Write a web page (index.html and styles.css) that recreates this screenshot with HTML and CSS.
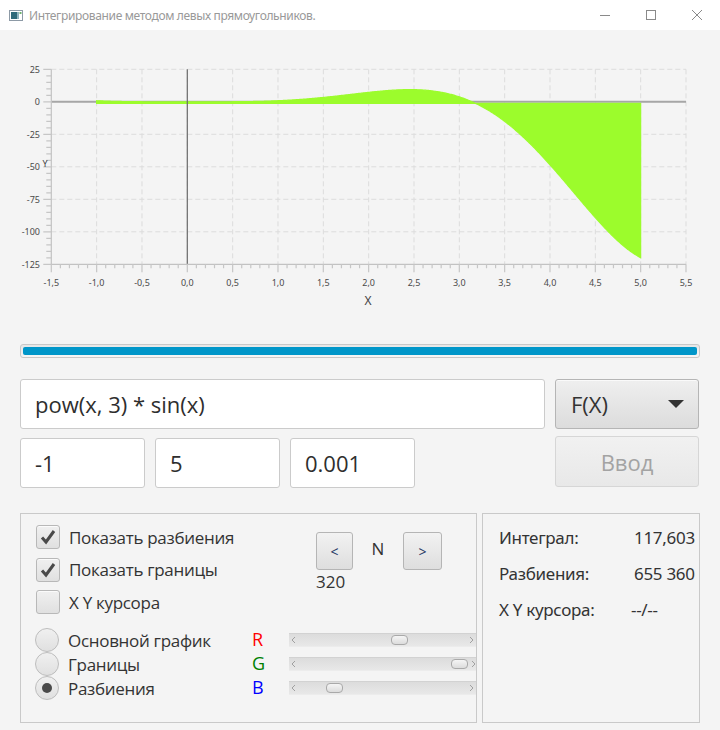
FILE: index.html
```html
<!DOCTYPE html>
<html lang="ru">
<head>
<meta charset="utf-8">
<title>Интегрирование методом левых прямоугольников.</title>
<link rel="stylesheet" href="styles.css">
</head>
<body>
<div class="window">
  <header class="titlebar">
    <svg class="app-icon" viewBox="0 0 14 11" width="14" height="11">
      <rect x="0.5" y="0.5" width="13" height="10" fill="#fff" stroke="#8d9aa6"/>
      <rect x="2" y="2" width="6" height="7" fill="#2f6a7a"/>
      <rect x="8" y="2" width="2" height="7" fill="#8fb3bd"/>
      <rect x="10.5" y="2" width="2" height="2" fill="#6fb26f"/>
    </svg>
    <span class="title">Интегрирование методом левых прямоугольников.</span>
    <div class="controls">
      <span class="ctl"><svg width="12" height="12" viewBox="0 0 12 12"><path d="M1 6.5h10" stroke="#8a8a8a" stroke-width="1"/></svg></span>
      <span class="ctl"><svg width="12" height="12" viewBox="0 0 12 12"><rect x="1.5" y="1.5" width="9" height="9" fill="none" stroke="#8a8a8a"/></svg></span>
      <span class="ctl"><svg width="12" height="12" viewBox="0 0 12 12"><path d="M1 1l10 10M11 1L1 11" stroke="#8a8a8a" stroke-width="1"/></svg></span>
    </div>
  </header>

  <main class="content">
    <div class="chart">
      <svg class="plot" width="720" height="304" viewBox="0 30 720 304">
        <g class="grid"></g>
        <line class="zero-h" x1="51.3" y1="101.8" x2="686" y2="101.8"/>
        <path class="area" d=""/>
        <line class="zero-v" x1="187.3" y1="69.3" x2="187.3" y2="264.3"/>
        <path class="axes" d="M51.3 69.3V264.3H686"/>
        <g class="ticks"></g>
        <g class="ylabels">
          <text x="40" y="69.3">25</text>
          <text x="40" y="101.8">0</text>
          <text x="40" y="134.3">-25</text>
          <text x="40" y="166.8">-50</text>
          <text x="40" y="199.3">-75</text>
          <text x="40" y="231.8">-100</text>
          <text x="40" y="264.3">-125</text>
        </g>
        <g class="xlabels">
          <text x="51.3" y="282.5">-1,5</text>
          <text x="96.6" y="282.5">-1,0</text>
          <text x="142" y="282.5">-0,5</text>
          <text x="187.3" y="282.5">0,0</text>
          <text x="232.6" y="282.5">0,5</text>
          <text x="278" y="282.5">1,0</text>
          <text x="323.3" y="282.5">1,5</text>
          <text x="368.6" y="282.5">2,0</text>
          <text x="414" y="282.5">2,5</text>
          <text x="459.3" y="282.5">3,0</text>
          <text x="504.6" y="282.5">3,5</text>
          <text x="550" y="282.5">4,0</text>
          <text x="595.3" y="282.5">4,5</text>
          <text x="640.6" y="282.5">5,0</text>
          <text x="686" y="282.5">5,5</text>
        </g>
        <text class="axis-name" x="368" y="300">X</text>
        <text class="axis-name y-name" x="45" y="163">Y</text>
      </svg>
    </div>

    <div class="progress"><div class="progress-bar" style="width:100%"></div></div>

    <div class="inputs">
      <input class="field" type="text" value="pow(x, 3) * sin(x)">
      <div class="combo"><span>F(X)</span><span class="arrow"></span></div>
      <div class="bounds">
        <input class="field" type="text" value="-1">
        <input class="field" type="text" value="5">
        <input class="field" type="text" value="0.001">
      </div>
      <button class="btn-enter" type="button" disabled>Ввод</button>
    </div>

    <div class="panels">
      <section class="panel panel-left">
        <div class="top-row">
          <div class="checks">
            <label class="check">
              <span class="box"><svg width="18" height="18" viewBox="0 0 18 18"><path d="M3 9.5l4 4.5L15 3" fill="none" stroke="#4a4a4a" stroke-width="3"/></svg></span>
              Показать разбиения
            </label>
            <label class="check">
              <span class="box"><svg width="18" height="18" viewBox="0 0 18 18"><path d="M3 9.5l4 4.5L15 3" fill="none" stroke="#4a4a4a" stroke-width="3"/></svg></span>
              Показать границы
            </label>
            <label class="check">
              <span class="box"></span>
              X Y курсора
            </label>
          </div>
          <div class="stepper">
            <div class="stepper-row">
              <button class="btn btn-prev" type="button">&lt;</button>
              <span class="n-label">N</span>
              <button class="btn btn-next" type="button">&gt;</button>
            </div>
            <div class="n-value">320</div>
          </div>
        </div>
        <div class="colors">
          <label class="radio"><span class="dot"></span>Основной график</label>
          <span class="chan chan-r">R</span>
          <div class="scroll">
            <svg class="arr" width="10" height="12" viewBox="0 0 10 12"><path d="M6 3L3 6l3 3" fill="none" stroke="#a0a0a0"/></svg>
            <span class="track"><span class="thumb" style="margin-left:92px"></span></span>
            <svg class="arr" width="10" height="12" viewBox="0 0 10 12"><path d="M4 3l3 3-3 3" fill="none" stroke="#a0a0a0"/></svg>
          </div>

          <label class="radio"><span class="dot"></span>Границы</label>
          <span class="chan chan-g">G</span>
          <div class="scroll">
            <svg class="arr" width="10" height="12" viewBox="0 0 10 12"><path d="M6 3L3 6l3 3" fill="none" stroke="#a0a0a0"/></svg>
            <span class="track"><span class="thumb" style="margin-left:152px"></span></span>
            <svg class="arr" width="10" height="12" viewBox="0 0 10 12"><path d="M4 3l3 3-3 3" fill="none" stroke="#a0a0a0"/></svg>
          </div>

          <label class="radio"><span class="dot on"></span>Разбиения</label>
          <span class="chan chan-b">B</span>
          <div class="scroll">
            <svg class="arr" width="10" height="12" viewBox="0 0 10 12"><path d="M6 3L3 6l3 3" fill="none" stroke="#a0a0a0"/></svg>
            <span class="track"><span class="thumb" style="margin-left:27px"></span></span>
            <svg class="arr" width="10" height="12" viewBox="0 0 10 12"><path d="M4 3l3 3-3 3" fill="none" stroke="#a0a0a0"/></svg>
          </div>
        </div>
      </section>
      <section class="panel panel-right">
        <span>Интеграл:</span><span class="val">117,603</span>
        <span>Разбиения:</span><span class="val">655 360</span>
        <span>X Y курсора:</span><span class="val cur">--/--</span>
      </section>
    </div>
  </main>
</div>
<script src="script.js"></script>
</body>
</html>
```

FILE: styles.css
```css
* { box-sizing: border-box; }
html, body { margin: 0; padding: 0; }
body {
  width: 720px;
  height: 730px;
  overflow: hidden;
  background: #f4f4f4;
  font-family: "Open Sans", "Noto Sans", sans-serif;
  color: #333;
}

.titlebar {
  height: 30px;
  background: #fff;
  display: flex;
  align-items: center;
  padding-left: 9px;
}
.app-icon { margin-right: 6px; flex: none; }
.title { flex: 1; font-size: 12px; letter-spacing: -0.35px; color: #999; font-family: "Noto Sans", sans-serif; }
.controls { display: flex; height: 30px; }
.ctl { width: 46px; height: 30px; display: flex; align-items: center; justify-content: center; }

.chart { height: 304px; }
.plot { display: block; }
.grid line { stroke: #dcdcdc; stroke-width: 1; stroke-dasharray: 5 3; }
.zero-h { stroke: #a6a6a6; stroke-width: 2; }
.area { fill: #9cfc2c; stroke: #9cfc2c; stroke-width: 1.2; }
.zero-v { stroke: #6a6a6a; stroke-width: 1.2; }
.axes { fill: none; stroke: #c2c2c2; stroke-width: 1.2; }
.ticks path { stroke: #c6c6c6; stroke-width: 1.2; fill: none; }
.ylabels text { font-size: 9px; fill: #4a4a4a; text-anchor: end; dominant-baseline: central; font-family: "Noto Sans", sans-serif; }
.xlabels text { font-size: 9px; fill: #4a4a4a; text-anchor: middle; dominant-baseline: central; font-family: "Noto Sans", sans-serif; }
.axis-name { font-size: 12px; fill: #444; text-anchor: middle; dominant-baseline: central; font-family: "Noto Sans", sans-serif; }
.y-name { font-size: 9px; }

.progress {
  margin: 10px 20px 0;
  height: 14px;
  border: 1px solid #c8c8c8;
  border-radius: 3px;
  background: linear-gradient(#e6e6e6, #f6f6f6);
  padding: 2px;
}
.progress-bar { height: 100%; background: #0096c9; border-radius: 2px; }

.inputs {
  display: grid;
  grid-template-columns: 525px 144px;
  column-gap: 10px;
  row-gap: 9px;
  margin: 21px 20px 0;
}
.field {
  display: block;
  width: 100%;
  height: 50px;
  margin: 0;
  border: 1px solid #cbcbcb;
  border-radius: 3px;
  background: #fff;
  font: 22px "Open Sans", sans-serif;
  color: #2e2e2e;
  padding: 0 14px;
  outline: none;
}
.bounds { display: grid; grid-template-columns: repeat(3, 125px); column-gap: 10px; }
.combo {
  height: 50px;
  border: 1px solid #b5b5b5;
  border-radius: 3px;
  background: linear-gradient(#efefef, #dcdcdc);
  box-shadow: inset 0 1px 0 #fafafa;
  display: flex;
  align-items: center;
  justify-content: space-between;
  padding: 0 14px 0 15px;
  font-size: 22px;
  color: #333;
}
.arrow {
  width: 0; height: 0;
  border-left: 8px solid transparent;
  border-right: 8px solid transparent;
  border-top: 8px solid #333;
}
.btn-enter {
  height: 51px;
  margin-top: -2px;
  border: 1px solid #d6d6d6;
  border-radius: 3px;
  background: linear-gradient(#f1f1f1, #e8e8e8);
  color: #a3a3a3;
  font: 22px "Open Sans", sans-serif;
  padding: 0;
}

.panels {
  display: flex;
  gap: 5px;
  margin: 25px 20px 0;
  height: 210px;
}
.panel { border: 1px solid #c9c9c9; }
.panel-left { width: 457px; padding: 11px 0 0 15px; }
.panel-right {
  width: 218px;
  padding: 11px 0 0 16px;
  display: grid;
  grid-template-columns: 134px auto;
  grid-auto-rows: 24px;
  row-gap: 12px;
  align-content: start;
  align-items: center;
  font-size: 17px;
  font-family: "Noto Sans", sans-serif;
  letter-spacing: -0.3px;
}
.val { padding-left: 1px; }
.val.cur { margin-left: -3px; }

.top-row { display: flex; }
.checks { width: 280px; display: flex; flex-direction: column; gap: 8.5px; }
.check { display: flex; align-items: center; height: 24px; font-size: 17px; letter-spacing: -0.3px; }
.box {
  width: 24px; height: 24px;
  margin-right: 9px;
  border: 1px solid #b8b8b8;
  border-radius: 3px;
  background: linear-gradient(#f0f0f0, #e0e0e0);
  box-shadow: inset 0 1px 0 #fbfbfb;
  display: flex; align-items: center; justify-content: center;
  flex: none;
}

.stepper { margin-top: 7px; }
.stepper-row { display: flex; align-items: center; }
.btn {
  height: 38px;
  border: 1px solid #b5b5b5;
  border-radius: 3px;
  background: linear-gradient(#f2f2f2, #dedede);
  color: #2a3b66;
  font: 14px "Noto Sans", sans-serif;
  padding: 0;
}
.btn-prev { width: 37px; }
.btn-next { width: 39px; }
.n-label { width: 50px; text-align: center; font-size: 17px; margin-top: -5px; }
.n-value { font-size: 17px; line-height: 22px; margin-top: 1px; }

.colors {
  display: grid;
  grid-template-columns: 216px 37px 187px;
  grid-auto-rows: 24px;
  margin-top: 14px;
  align-items: center;
}
.radio { display: flex; align-items: center; font-size: 17px; letter-spacing: -0.3px; margin-left: -1px; }
.dot {
  width: 24px; height: 24px;
  border-radius: 50%;
  border: 1px solid #bdbdbd;
  background: linear-gradient(#f0f0f0, #e0e0e0);
  margin-right: 9px;
  display: flex; align-items: center; justify-content: center;
  flex: none;
}
.dot.on::after { content: ""; width: 10px; height: 10px; border-radius: 50%; background: #4a4a4a; }
.chan { font-size: 18px; margin-top: -2px; }
.chan-r { color: #f00; }
.chan-g { color: #008000; }
.chan-b { color: #00f; }

.scroll {
  height: 14px;
  display: flex;
  align-items: center;
  background: linear-gradient(#dcdcdc, #e8e8e8);
  border-top: 1px solid #d2d2d2;
  border-bottom: 1px solid #ececec;
}
.arr { flex: none; display: block; }
.track { flex: 1; display: flex; align-items: center; }
.thumb {
  width: 17px; height: 10px;
  border: 1px solid #a9a9a9;
  border-radius: 4px;
  background: linear-gradient(#f5f5f5, #dcdcdc);
}
```

FILE: script.js
```js
(function () {
  var NS = 'http://www.w3.org/2000/svg';
  var X0 = 187.3, SX = 90.667, Y0 = 101.8, SY = 1.3;
  var L = 51.3, R = 686, T = 69.3, B = 264.3;
  function px(x) { return X0 + x * SX; }
  function py(y) { return Y0 - y * SY; }
  function add(parent, tag, attrs) {
    var e = document.createElementNS(NS, tag);
    for (var k in attrs) e.setAttribute(k, attrs[k]);
    parent.appendChild(e);
    return e;
  }
  var grid = document.querySelector('.grid');
  var ticks = document.querySelector('.ticks');
  var area = document.querySelector('.area');
  var i, j, x, y;
  for (i = 1; i <= 14; i++) {
    x = L + i * (R - L) / 14;
    add(grid, 'line', { x1: x, y1: T, x2: x, y2: B });
  }
  for (j = 0; j < 6; j++) {
    y = T + j * (B - T) / 6;
    add(grid, 'line', { x1: L, y1: y, x2: R, y2: y });
  }
  var d = '';
  for (i = 0; i <= 70; i++) {
    x = L + i * (R - L) / 70;
    d += 'M' + x.toFixed(2) + ' ' + B + 'v' + (i % 5 === 0 ? 8 : 4);
  }
  for (j = 0; j <= 30; j++) {
    y = T + j * (B - T) / 30;
    d += 'M' + L + ' ' + y.toFixed(2) + 'h' + (j % 5 === 0 ? -8 : -5);
  }
  add(ticks, 'path', { d: d });

  function f(v) { return Math.pow(v, 3) * Math.sin(v); }
  var base = Y0 + 1.5;
  var p = 'M' + px(-1).toFixed(2) + ' ' + base;
  for (i = 0; i <= 600; i++) {
    x = -1 + i * 0.01;
    p += 'L' + px(x).toFixed(2) + ' ' + py(f(x)).toFixed(2);
  }
  p += 'L' + px(5).toFixed(2) + ' ' + base + 'Z';
  area.setAttribute('d', p);
})();
```
